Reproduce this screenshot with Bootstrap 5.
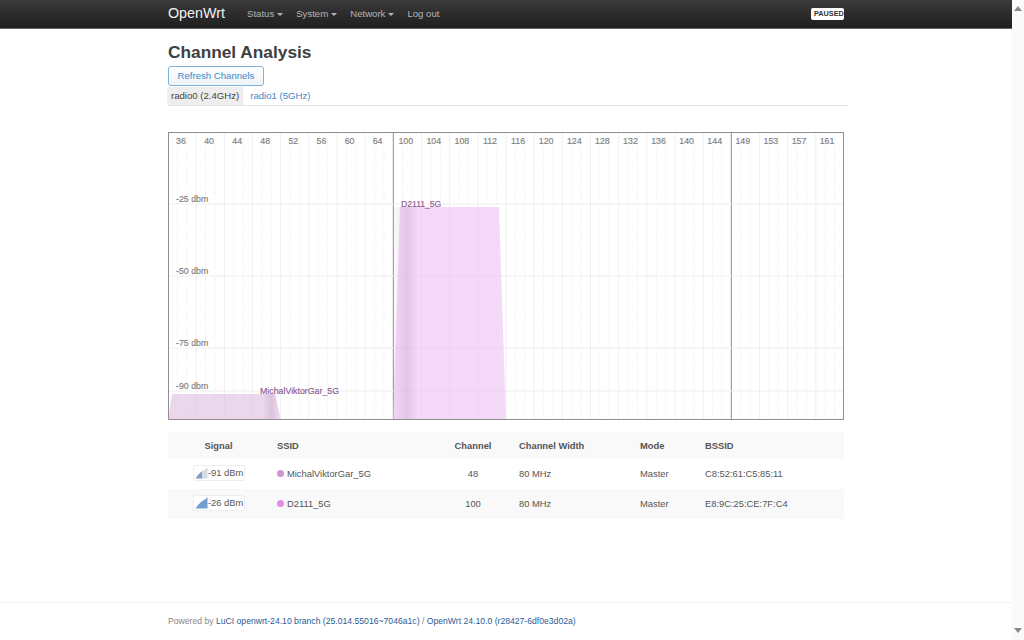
<!DOCTYPE html>
<html lang="en"><head><meta charset="utf-8">
<title>Channel Analysis</title>
<link rel="stylesheet" href="https://cdn.jsdelivr.net/npm/bootstrap@5.3.0/dist/css/bootstrap.min.css">
<style>
html,body{height:640px;overflow:hidden}
body{font-family:"Liberation Sans",Arial,sans-serif;color:#404040;font-size:10.5px;background:#fff}
.pg-shell{height:640px;width:1012px;display:flex;flex-direction:column}
.wrt-bar{height:29px;background:linear-gradient(#3a3a3a,#1f1f1f);border-bottom:1px solid #666;padding-left:168px;padding-right:168px;flex:none}
.wrt-brand{font-size:14.3px;color:#f2f2f2;width:79px}
.wrt-link{font-size:9.6px;color:#b5b5b5;margin-right:13px;text-decoration:none}
.wrt-caret{display:inline-block;border-top:3px solid #b5b5b5;border-left:3px solid transparent;border-right:3px solid transparent;vertical-align:middle;margin-left:3px}
.wrt-paused{background:#fff;color:#333;font-size:7.3px;font-weight:700;border-radius:2px;padding:2px 3px;line-height:8px;width:33px;height:12px;text-align:center;white-space:nowrap}
.wrt-main{padding:0 164px 0 168px;flex:1}
.wrt-title{font-size:17.3px;font-weight:700;line-height:20px;margin:13px 0 4px;color:#404040}
.wrt-refresh{font-size:9.6px;line-height:12px;padding:3px 0;color:#3d8bc4;border:1px solid #7fb2d6;border-radius:3px;background:linear-gradient(#fff,#eef4f9);display:block;width:96px;height:20px;white-space:nowrap;text-align:center}
.wrt-tabs{border-bottom:1px solid #e4e4e4;margin-top:1px;height:19px}
.wrt-tab{font-size:9.6px;line-height:18px;height:18px}
.wrt-tab-on{background:#eee;color:#444;margin-left:-1px;padding:0 4px}
.wrt-tab-off{color:#3d8bc4;padding:0 6px;margin-left:1px}
.wrt-chart{display:block;margin-top:26px;width:680px;height:290px}
.wrt-table{width:676px;margin-top:10px;font-size:9.35px;color:#555}
.wrt-row{display:grid;grid-template-columns:109px 165px 62px 136px 65px 1fr;height:30px;align-items:center}
.wrt-head{font-weight:700;height:27px;padding-top:1px;background:#f9f9f9;color:#555}
.wrt-alt{background:#f9f9f9}
.wrt-ctr{text-align:center}
.wrt-sigh{text-align:center;padding-right:8px}
.wrt-wcol{padding-left:15px}
.wrt-sig{display:inline-flex;align-items:center;border:1px solid #eee;border-radius:2px;height:16px;padding:0 0 0 1px;background:#fff;color:#555;margin-left:25px;width:52px;white-space:nowrap}
.wrt-dot{display:inline-block;width:7px;height:7px;border-radius:50%;margin-right:3px;vertical-align:-.5px}
.wrt-foot{border-top:1px solid #f2f2f2;height:38px;padding:12px 164px 0 168px;font-size:8.65px;color:#888;flex:none}
.wrt-foot a{color:#2a5d95;text-decoration:none}
.wrt-scroll{position:absolute;top:0;right:0;width:12px;height:640px;background:#fafafa}
.wrt-scroll i{position:absolute;left:2px;border-left:4px solid transparent;border-right:4px solid transparent}
.wrt-up{top:6px;border-bottom:5px solid #888}
.wrt-dn{bottom:7px;border-top:5px solid #888}
svg text{font-family:"Liberation Sans",Arial,sans-serif}
.wrt-lbl{stroke:currentColor;stroke-width:.15}
</style></head>
<body>
<div class="pg-shell">
<nav class="wrt-bar d-flex align-items-center">
  <span class="wrt-brand">OpenWrt</span>
  <a class="wrt-link" href="#">Status<span class="wrt-caret"></span></a>
  <a class="wrt-link" href="#">System<span class="wrt-caret"></span></a>
  <a class="wrt-link" href="#">Network<span class="wrt-caret"></span></a>
  <a class="wrt-link" href="#">Log out</a>
  <span class="wrt-paused ms-auto">PAUSED</span>
</nav>
<main class="wrt-main">
  <h2 class="wrt-title">Channel Analysis</h2>
  <button class="btn wrt-refresh" type="button">Refresh Channels</button>
  <div class="wrt-tabs d-flex">
    <span class="wrt-tab wrt-tab-on">radio0 (2.4GHz)</span>
    <span class="wrt-tab wrt-tab-off">radio1 (5GHz)</span>
  </div>
  <svg class="wrt-chart" id="chart" viewBox="0 0 680 290" xmlns="http://www.w3.org/2000/svg"></svg>
  <div class="wrt-table">
    <div class="wrt-row wrt-head"><span class="wrt-sigh">Signal</span><span>SSID</span><span class="wrt-ctr">Channel</span><span class="wrt-wcol">Channel Width</span><span>Mode</span><span>BSSID</span></div>
    <div class="wrt-row"><span><span class="wrt-sig"><svg class="flex-shrink-0" width="13" height="12" viewBox="0 0 13 12"><path d="M0.500 11.500L12.500 11.500L12.500 0.500L9 3L6 5L3 8Z" fill="#d5dbe2"/><path d="M0.500 11.500L7 11.500L7 4.500L6 5L3 8Z" fill="#7f9fc2"/></svg><span>-91 dBm</span></span></span><span><i class="wrt-dot" style="background:#cf97cf"></i>MichalViktorGar_5G</span><span class="wrt-ctr">48</span><span class="wrt-wcol">80 MHz</span><span>Master</span><span>C8:52:61:C5:85:11</span></div>
    <div class="wrt-row wrt-alt"><span><span class="wrt-sig"><svg class="flex-shrink-0" width="13" height="12" viewBox="0 0 13 12"><path d="M0.500 11.500L12.500 11.500L12.500 0.500L9 3L6 5L3 8Z" fill="#6f9fd0"/></svg><span>-26 dBm</span></span></span><span><i class="wrt-dot" style="background:#e58ae5"></i>D2111_5G</span><span class="wrt-ctr">100</span><span class="wrt-wcol">80 MHz</span><span>Master</span><span>E8:9C:25:CE:7F:C4</span></div>
  </div>
</main>
<footer class="wrt-foot">Powered by <a href="#">LuCI openwrt-24.10 branch (25.014.55016~7046a1c)</a> / <a href="#">OpenWrt 24.10.0 (r28427-6df0e3d02a)</a></footer>
</div>
<div class="wrt-scroll"><i class="wrt-up"></i><i class="wrt-dn"></i></div>
<script src="https://cdn.jsdelivr.net/npm/bootstrap@5.3.0/dist/js/bootstrap.bundle.min.js"></script>
<script>
(function(){
var chans=[36,40,44,48,52,56,60,64,100,104,108,112,116,120,124,128,132,136,140,144,149,153,157,161];
var W=676,H=288,s='',c=W/24;
for(var i=0;i<24;i++){
  var x=i*c;
  for(var k=1;k<3;k++){var xx=x+c*k/3;s+='<line x1="'+xx+'" y1="0" x2="'+xx+'" y2="'+H+'" stroke="#f3f3f3" stroke-dasharray="3 2"/>';}
  if(i)s+='<line x1="'+x+'" y1="0" x2="'+x+'" y2="'+H+'" stroke="'+((i==8||i==20)?'#8f8f8f':'#efefef')+'"/>';
  s+='<text class="wrt-lbl" x="'+(13+i*28.09)+'" y="12" font-size="8.8" fill="#808080" color="#808080" text-anchor="middle">'+chans[i]+'</text>';
}
[[72,'-25 dbm',64],[144,'-50 dbm',136],[216,'-75 dbm',208],[259,'-90 dbm',251]].forEach(function(r){
  s+='<line x1="0" y1="'+r[0]+'" x2="'+W+'" y2="'+r[0]+'" stroke="#eeeeee"/>';
  s+='<text class="wrt-lbl" x="8" y="'+(r[2]+6)+'" font-size="8.8" fill="#808080" color="#808080">'+r[1]+'</text>';
});
s+='<defs><linearGradient id="bandB" x1="0" x2="1" y1="0" y2="0"><stop offset="0" stop-color="#9a6a9a" stop-opacity=".04"/><stop offset=".55" stop-color="#9a6a9a" stop-opacity=".18"/><stop offset="1" stop-color="#9a6a9a" stop-opacity="0"/></linearGradient></defs>';
s+='<polygon points="0,288 4,262 107,262 113,288" fill="#e2c6e2" fill-opacity=".7"/>';
s+='<rect x="96" y="262" width="14" height="26" fill="url(#bandB)"/>';
s+='<polygon points="225,288 232,75 331,75 338,288" fill="#f0c4f6" fill-opacity=".65"/>';
s+='<rect x="226" y="75" width="24" height="213" fill="url(#bandB)"/>';
s+='<text class="wrt-lbl" x="233" y="75" font-size="8.6" fill="#8f5a8f" color="#8f5a8f">D2111_5G</text>';
s+='<text class="wrt-lbl" x="92" y="262" font-size="8.8" fill="#8f5a8f" color="#8f5a8f">MichalViktorGar_5G</text>';
s+='<rect x=".5" y=".5" width="'+(W-1)+'" height="'+(H-1)+'" fill="none" stroke="#8f8f8f"/>';
document.getElementById('chart').innerHTML=s;
})();
</script>
</body></html>
